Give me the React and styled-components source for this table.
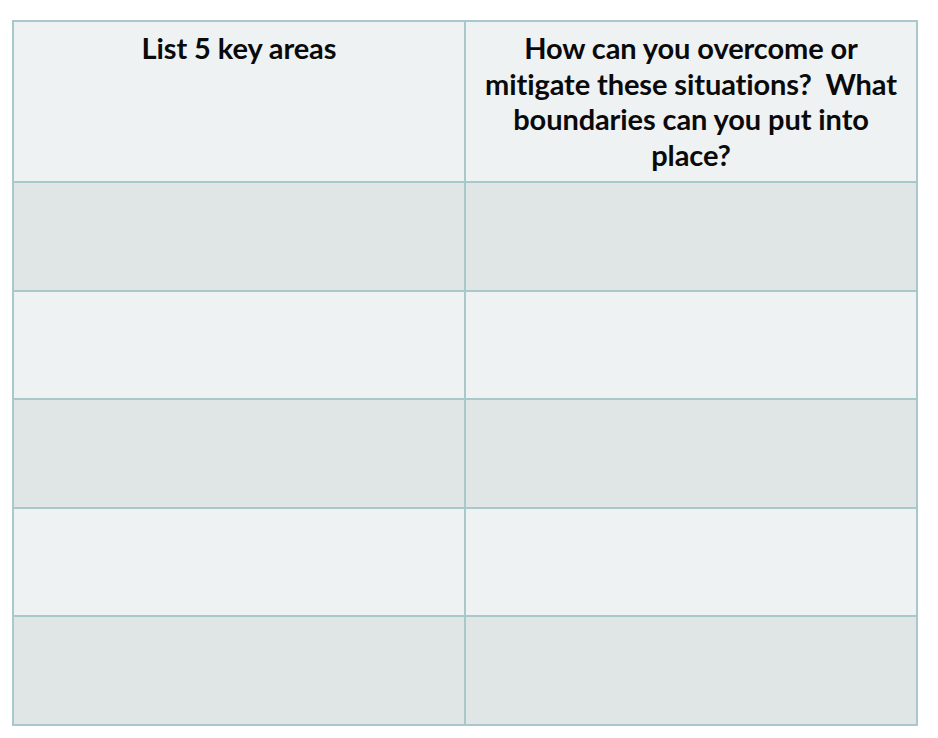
import React from "react";
import styled, { createGlobalStyle } from "styled-components";

const Global = createGlobalStyle`
  html, body { margin: 0; padding: 0; background: #ffffff; }
  body { font-family: "Lato", "Open Sans", sans-serif; }
`;

const Page = styled.div`
  padding: 20px 0 0 12px;
`;

const Table = styled.table`
  width: 906px;
  border-collapse: collapse;
  table-layout: fixed;
`;

const HeadCell = styled.th`
  height: 151px;
  border: 2px solid #a9c8cb;
  background: #eff2f3;
  vertical-align: top;
  padding: 8px 16px 0;
  font-family: "Lato", "Open Sans", sans-serif;
  font-weight: 700;
  font-size: 29px;
  line-height: 35.5px;
  color: #0a0a0a;
  text-align: center;
  letter-spacing: -0.1px;
`;

const Cell = styled.td`
  height: 106.6px;
  padding: 0;
  border: 2px solid #a9c8cb;
  background: ${(p) => (p.$dark ? "#e0e6e6" : "#eff2f3")};
`;

export default function App() {
  const rows = [0, 1, 2, 3, 4];
  return (
    <Page>
      <Global />
      <Table>
        <thead>
          <tr>
            <HeadCell>List 5 key areas</HeadCell>
            <HeadCell>
              How can you overcome or mitigate these situations?&nbsp; What
              boundaries can you put into place?
            </HeadCell>
          </tr>
        </thead>
        <tbody>
          {rows.map((r) => (
            <tr key={r}>
              <Cell $dark={r % 2 === 0} />
              <Cell $dark={r % 2 === 0} />
            </tr>
          ))}
        </tbody>
      </Table>
    </Page>
  );
}
